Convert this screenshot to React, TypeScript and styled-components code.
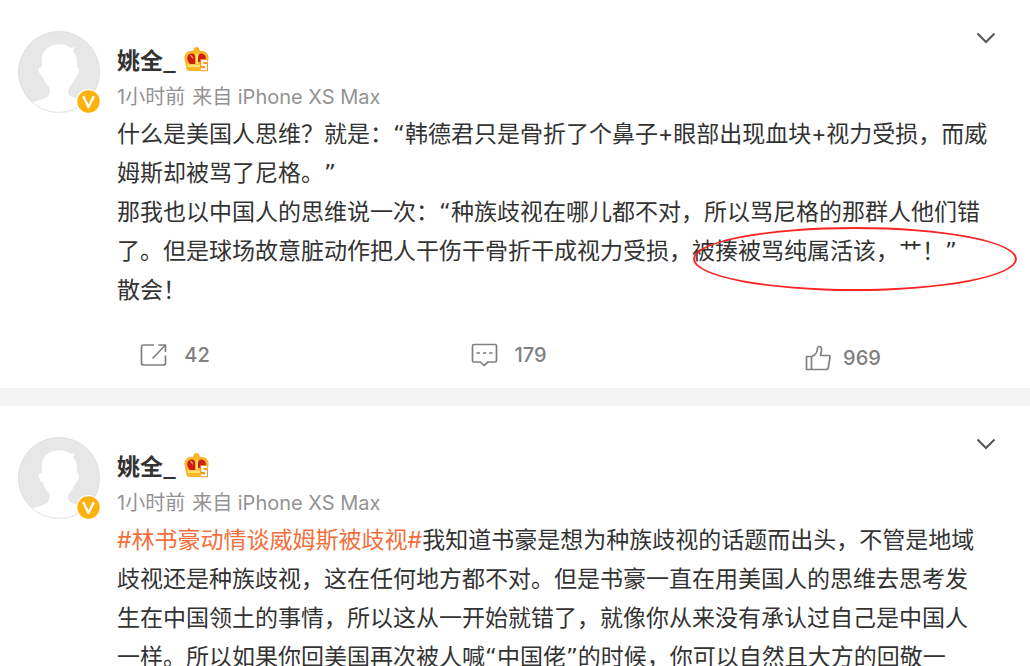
import React from "react";
import styled, { createGlobalStyle } from "styled-components";

const GlobalStyle = createGlobalStyle`
  *, *::before, *::after { box-sizing: border-box; }
  body {
    margin: 0;
    background: #fff;
    color: #333;
    font-family: Inter, "Noto Sans CJK SC", sans-serif;
    text-spacing-trim: space-all;
  }
`;

const Feed = styled.main`
  display: flex;
  flex-direction: column;
  gap: 18px;
  height: 100vh;
  overflow: hidden;
  background: #f3f3f3;
`;

const Post = styled.article`
  position: relative;
  flex: none;
  background: #fff;
  padding-top: 31px;
`;

const PostBody = styled.div`
  display: flex;
  gap: 17px;
  padding: 0 18px;
`;

const AvatarLink = styled.a`
  position: relative;
  flex: none;
  width: 82px;
  height: 82px;
`;

const VerifiedBadge = styled.span`
  position: absolute;
  right: -1px;
  bottom: -1px;
  width: 25px;
  height: 25px;
`;

const Content = styled.div`
  flex: 1;
  min-width: 0;
  padding-top: 13px;
`;

const NameRow = styled.div`
  display: flex;
  align-items: center;
  gap: 8px;
  height: 30px;
`;

const Name = styled.a`
  color: #333;
  font-family: "Noto Sans CJK SC", sans-serif;
  font-size: 23px;
  line-height: 30px;
  font-weight: 700;
  text-decoration: none;
`;

const Meta = styled.div`
  display: flex;
  gap: 7px;
  margin-top: 10px;
  color: #939393;
  font-size: 20px;
  line-height: 26px;
`;

const Text = styled.p`
  margin: 5px 0 0;
  font-size: 23px;
  line-height: 39px;
  white-space: nowrap;
`;

const Quote = styled.span`
  font-family: "DejaVu Sans", sans-serif;
  line-height: 1;
`;

const Topic = styled.a`
  color: #f36f3a;
  text-decoration: none;
`;

const MenuButton = styled.button`
  position: absolute;
  top: 28px;
  right: 34px;
  padding: 0;
  border: 0;
  background: none;
  line-height: 0;
  cursor: pointer;
`;

const Actions = styled.footer`
  display: grid;
  grid-template-columns: repeat(3, 1fr);
  padding: 27px 20px 13px 8px;
`;

const Action = styled.button<{ $like?: boolean }>`
  display: flex;
  align-items: center;
  justify-content: center;
  gap: ${(p) => (p.$like ? 12 : 16)}px;
  height: 38px;
  padding: ${(p) => (p.$like ? "4px 0 0" : "0 0 2px")};
  border: 0;
  background: none;
  color: #808080;
  font-family: inherit;
  font-size: 20px;
  font-weight: 500;
  line-height: 34px;
  cursor: pointer;
`;

const Mark = styled.div`
  position: absolute;
  top: 227px;
  right: 13px;
  width: 324px;
  height: 64px;
  border: 2px solid #fb2222;
  border-radius: 50%;
  pointer-events: none;
`;

const Avatar = () => (
  <svg width="82" height="82" viewBox="0 0 82 82" aria-hidden="true">
    <defs>
      <clipPath id="avatar-disc">
        <circle cx="41" cy="41" r="40" />
      </clipPath>
    </defs>
    <circle cx="41" cy="41" r="40.500" fill="#e7e7e7" stroke="#dedede" />
    <g clipPath="url(#avatar-disc)" fill="#fff">
      <path d="M24 36C23 27 24 20 31 16C37 13 46 12 51 16C53 17 55 17 57 16L55 20C59 24 59 30 59 36C62 37 61 41 60 43C59 45 58 46 57 47C56 51 53 54 51 57C49 61 50 64 54 66C62 69 70 71 76 76V84H6V76C14 70 22 70 29 66C32 64 32 60 31 56C29 53 26 51 25 46C23 45 22 43 21 41C20 39 20 36 24 36Z" />
    </g>
    <path d="M14 71A40.500 40.500 0 0 0 66 73" fill="none" stroke="#ececec" />
  </svg>
);

const Verified = () => (
  <svg width="25" height="25" viewBox="0 0 25 25" aria-hidden="true">
    <circle cx="12.500" cy="12.500" r="12.500" fill="#fff" />
    <circle cx="12.500" cy="12.500" r="11.200" fill="#fdb10d" />
    <path d="M7.600 8L12.500 18L17.400 8" fill="none" stroke="#fff" strokeWidth="2.400" strokeLinecap="round" strokeLinejoin="round" />
  </svg>
);

const Crown = () => (
  <svg width="25" height="25" viewBox="0 0 25 25" role="img" aria-label="会员等级5">
    <path d="M9.500 3A3 3 0 0 1 15.500 3C16 4 17 4 19 4C23 5 25 8 24.500 12L22.500 22Q22 24 20 24H5Q3 24 2.500 22L.500 12C0 8 2 5 6 4C8 4 9 4 9.500 3Z" fill="#fbb52b" />
    <path d="M4.500 15C2.500 12 3 8 6 7C9 5.500 11.500 8 11.500 11V17H6ZM14 11C14 8 16 5.500 19 7C22 8 22.500 11 21 14L14 15Z" fill="#cf1c12" />
    <path d="M11.500 7.500L12.500 6L14 7.500V17H11.500ZM6 8C8 7.500 9 10 9 12" fill="#ffe05a" />
    <path d="M3 17.500H16V20H4Z" fill="#ffe36a" />
    <path d="M23 14H18.300V18H22V22.300H17" fill="none" stroke="#f59a1d" strokeWidth="4" />
    <path d="M23 14H18.300V18H22V22.300H17" fill="none" stroke="#fff" strokeWidth="2" />
  </svg>
);

const Chevron = () => (
  <svg width="20" height="20" viewBox="0 0 20 20" fill="none" stroke="#555" strokeWidth="2" aria-hidden="true">
    <path d="M1.500 5.500L10 14L18.500 5.500" />
  </svg>
);

const line = { fill: "none", stroke: "#808080", strokeWidth: 1.7, strokeLinejoin: "round" as const };

const ShareIcon = () => (
  <svg width="28" height="24" viewBox="0 0 28 24" aria-hidden="true" {...line}>
    <path d="M14 2H3.500Q1.500 2 1.500 4V20Q1.500 22 3.500 22H23.500Q25.500 22 25.500 20V12.500M12.500 15.500L25 2.500M18.500 2H25.500V9" />
  </svg>
);

const CommentIcon = () => (
  <svg width="27" height="24" viewBox="0 0 27 24" aria-hidden="true" {...line}>
    <path d="M3 1.500H24Q25.500 1.500 25.500 3V17.500Q25.500 19 24 19H17L13 22.500L9.500 19H3Q1.500 19 1.500 17.500V3Q1.500 1.500 3 1.500Z" />
    <path d="M5.500 10H9M11.800 10H15.300M18 10H21.500" />
  </svg>
);

const LikeIcon = () => (
  <svg width="26" height="26" viewBox="0 0 26 26" aria-hidden="true" {...line}>
    <path d="M1.500 11.500H6.500V24.500H1.500ZM6.500 11.500C10 10.500 12 8 12.300 4.500C12.500 .500 16.500 .500 16.500 4.500C16.500 6.500 16 8.500 15.500 10.500H24Q25.200 10.500 25 12L23.300 22.500Q23 24.500 21 24.500H6.500Z" />
  </svg>
);

function PostHeader() {
  return (
    <>
      <NameRow>
        <Name href="#user">姚全_</Name>
        <Crown />
      </NameRow>
      <Meta>
        <span>1小时前</span>
        <span>来自 iPhone XS Max</span>
      </Meta>
    </>
  );
}

function PostFrame({ children, footer }: { children: React.ReactNode; footer?: React.ReactNode }) {
  return (
    <Post>
      <PostBody>
        <AvatarLink href="#user" aria-label="姚全_">
          <Avatar />
          <VerifiedBadge>
            <Verified />
          </VerifiedBadge>
        </AvatarLink>
        <Content>
          <PostHeader />
          <Text>{children}</Text>
        </Content>
      </PostBody>
      <MenuButton type="button" aria-label="更多">
        <Chevron />
      </MenuButton>
      {footer}
    </Post>
  );
}

export default function App() {
  return (
    <>
      <GlobalStyle />
      <Feed lang="zh-CN">
        <PostFrame
          footer={
            <>
              <Actions>
                <Action type="button"><ShareIcon />42</Action>
                <Action type="button"><CommentIcon />179</Action>
                <Action type="button" $like><LikeIcon />969</Action>
              </Actions>
              <Mark />
            </>
          }
        >
          什么是美国人思维？就是：<Quote>“</Quote>韩德君只是骨折了个鼻子+眼部出现血块+视力受损，而威<br />
          姆斯却被骂了尼格。<Quote>”</Quote><br />
          那我也以中国人的思维说一次：<Quote>“</Quote>种族歧视在哪儿都不对，所以骂尼格的那群人他们错<br />
          了。但是球场故意脏动作把人干伤干骨折干成视力受损，被揍被骂纯属活该，艹！<Quote>”</Quote><br />
          散会！
        </PostFrame>
        <PostFrame>
          <Topic href="#topic">#林书豪动情谈威姆斯被歧视#</Topic>我知道书豪是想为种族歧视的话题而出头，不管是地域<br />
          歧视还是种族歧视，这在任何地方都不对。但是书豪一直在用美国人的思维去思考发<br />
          生在中国领土的事情，所以这从一开始就错了，就像你从来没有承认过自己是中国人<br />
          一样。所以如果你回美国再次被人喊<Quote>“</Quote>中国佬<Quote>”</Quote>的时候，你可以自然且大方的回敬一
        </PostFrame>
      </Feed>
    </>
  );
}
